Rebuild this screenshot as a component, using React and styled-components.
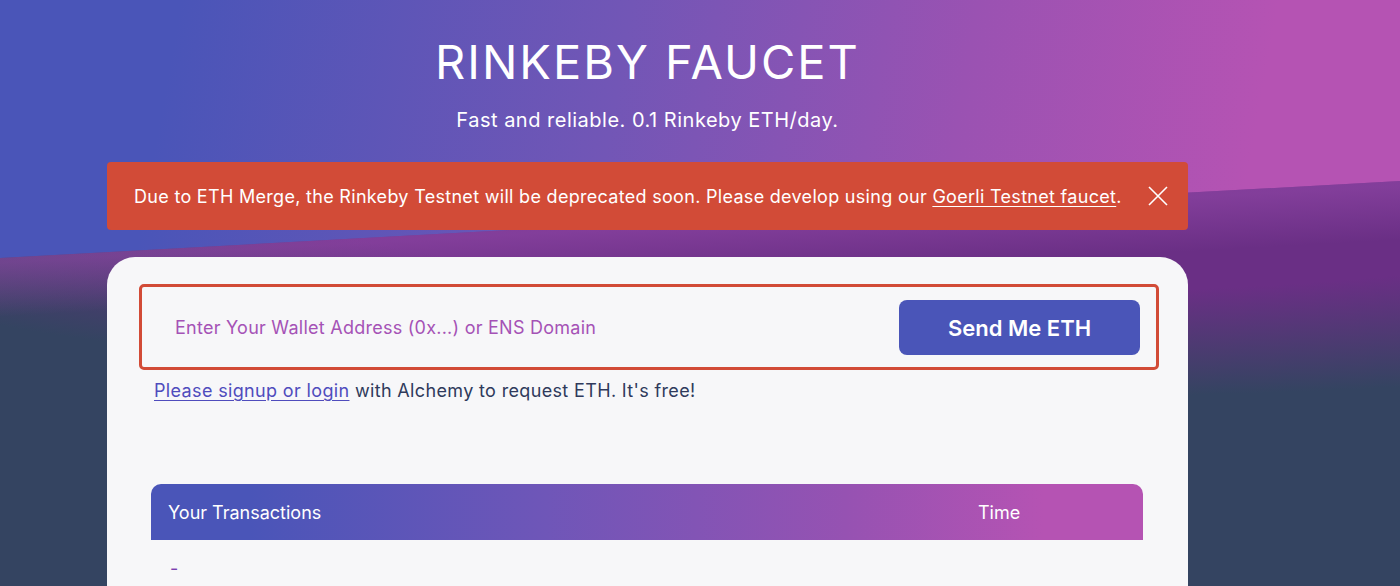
import styled, { createGlobalStyle } from 'styled-components'

const GlobalStyle = createGlobalStyle`
    html, body {
        margin: 0;
        padding: 0;
    }
    body {
        font-family: Inter, 'Noto Sans', sans-serif;
        background: #344461;
    }
`;

const Page = styled.div`
    position: relative;
    min-height: 100vh;
    overflow: hidden;
    background: linear-gradient(100deg, #4a55b8 12%, #7256b6 42%, #9a52b2 65%, #b553b3 85%);

    &::before {
        content: '';
        position: absolute;
        inset: 0;
        clip-path: polygon(0 258px, 100% 181px, 100% 100%, 0 100%);
        background:
            linear-gradient(176.85deg, rgba(160, 80, 180, 0.45) 39%, rgba(160, 80, 180, 0) 47%),
            radial-gradient(ellipse 1500px 260px at 1000px 150px, #6a2f85 55%, #344461 95%);
    }
`;

const Container = styled.div`
    position: relative;
    z-index: 1;
    width: 1081px;
    margin-left: 107px;
    display: flex;
    flex-direction: column;
    align-items: center;
    padding-top: 32px;
`;

const Title = styled.h1`
    margin: 0;
    color: #ffffff;
    font-size: 47px;
    font-weight: 400;
    letter-spacing: 2px;
    line-height: 60px;
`;

const Subtitle = styled.p`
    margin: 14px 0 0;
    color: #ffffff;
    font-size: 20px;
    letter-spacing: 0.5px;
    line-height: 28px;
`;

const Banner = styled.div`
    margin-top: 28px;
    width: 100%;
    box-sizing: border-box;
    height: 68px;
    display: flex;
    align-items: center;
    justify-content: space-between;
    padding: 0 20px 0 27px;
    background: #d24b37;
    border-radius: 4px;
    color: #ffffff;
    font-size: 18px;
    letter-spacing: 0.3px;
`;

const BannerLink = styled.a`
    color: #ffffff;
    text-decoration: underline;
    text-underline-offset: 3px;
`;

const CloseButton = styled.button`
    border: none;
    background: none;
    padding: 0;
    width: 20px;
    height: 20px;
    display: flex;
    cursor: pointer;
`;

const Card = styled.div`
    margin-top: 27px;
    width: 100%;
    box-sizing: border-box;
    min-height: 340px;
    background: #f7f7f9;
    border-radius: 28px 28px 0 0;
    padding: 27px 29px 0 32px;
`;

const InputBox = styled.div`
    height: 86px;
    box-sizing: border-box;
    border: 3px solid #d24b37;
    border-radius: 5px;
    display: flex;
    align-items: center;
    padding: 1px 16px 0 31px;
`;

const AddressInput = styled.input`
    flex: 1;
    border: none;
    outline: none;
    background: transparent;
    font-family: inherit;
    font-size: 18px;
    letter-spacing: 0.25px;
    color: #333d5c;

    &::placeholder {
        color: #a552b6;
    }
`;

const SendButton = styled.button`
    width: 241px;
    height: 55px;
    border: none;
    border-radius: 8px;
    background: #4a55b8;
    color: #ffffff;
    font-family: inherit;
    font-size: 22px;
    font-weight: 600;
    cursor: pointer;
`;

const HelpText = styled.p`
    margin: 8px 0 0 15px;
    font-size: 18px;
    letter-spacing: 0.35px;
    line-height: 26px;
    color: #2f3a5c;
`;

const HelpLink = styled.a`
    color: #4f4cbd;
    text-decoration: underline;
    text-underline-offset: 3px;
`;

const Table = styled.div`
    margin: 80px 16px 0 12px;
`;

const TableHead = styled.div`
    height: 56px;
    display: grid;
    grid-template-columns: 810px 1fr;
    align-items: center;
    padding-left: 17px;
    border-radius: 10px 10px 0 0;
    background: linear-gradient(90deg, #4a55b8 10%, #6f56b8 40%, #9652b2 70%, #b553b3 90%);
    color: #ffffff;
    font-size: 18px;
`;

const TableRow = styled.div`
    padding: 18px 0 0 19px;
    font-size: 18px;
    color: #7a3fb0;
`;

function CloseIcon() {
    return (
        <svg width="20" height="20" viewBox="0 0 20 20" fill="none" stroke="#ffffff" strokeWidth="1.6">
            <path d="M1 1 L19 19 M19 1 L1 19" />
        </svg>
    )
}

export default function App() {

    return (
        <>
            <GlobalStyle />
            <Page>
                <Container>
                    <Title>RINKEBY FAUCET</Title>
                    <Subtitle>Fast and reliable. 0.1 Rinkeby ETH/day.</Subtitle>
                    <Banner>
                        <span>
                            Due to ETH Merge, the Rinkeby Testnet will be deprecated soon. Please develop using our{' '}
                            <BannerLink href="#">Goerli Testnet faucet</BannerLink>.
                        </span>
                        <CloseButton aria-label="close">
                            <CloseIcon />
                        </CloseButton>
                    </Banner>
                    <Card>
                        <InputBox>
                            <AddressInput placeholder="Enter Your Wallet Address (0x...) or ENS Domain" />
                            <SendButton>Send Me ETH</SendButton>
                        </InputBox>
                        <HelpText>
                            <HelpLink href="#">Please signup or login</HelpLink> with Alchemy to request ETH. It's free!
                        </HelpText>
                        <Table>
                            <TableHead>
                                <span>Your Transactions</span>
                                <span>Time</span>
                            </TableHead>
                            <TableRow>-</TableRow>
                        </Table>
                    </Card>
                </Container>
            </Page>
        </>
    )
}
